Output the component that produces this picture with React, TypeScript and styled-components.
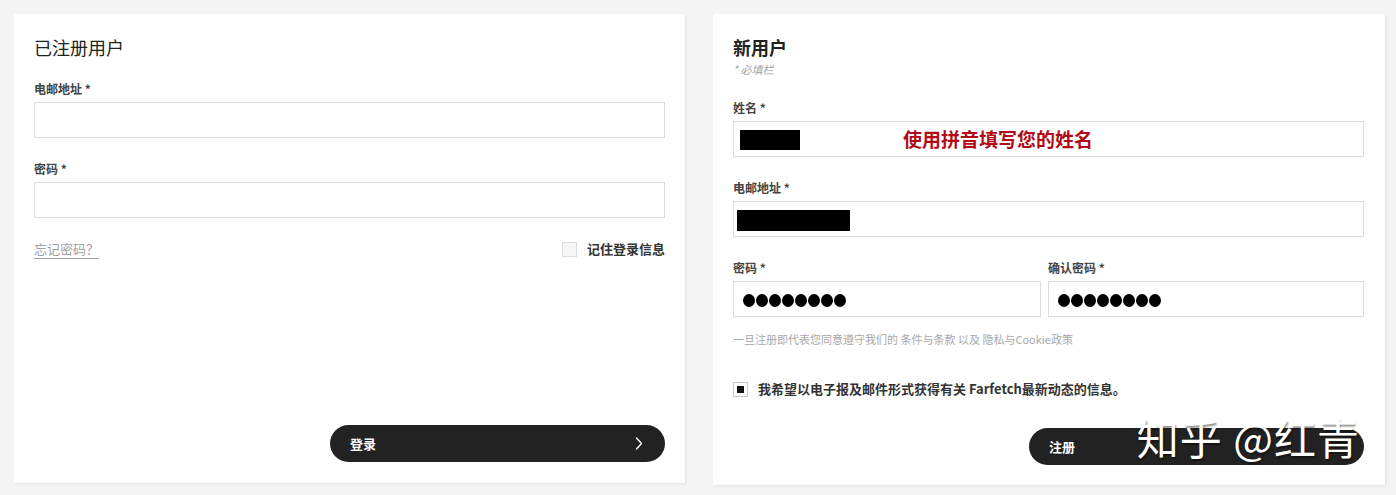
import React from 'react';
import styled, { createGlobalStyle } from 'styled-components';

const GlobalStyle = createGlobalStyle`
  html, body {
    margin: 0;
    padding: 0;
    background: #f4f4f4;
  }

  body {
    font-family: 'Noto Sans CJK SC', 'Noto Sans', 'Liberation Sans', sans-serif;
    color: #222;
  }
`;

const PASSWORD_DOTS = 8;

function Dots() {
  return (
    <DotRow>
      {Array.from({ length: PASSWORD_DOTS }).map((_, index) => (
        <Dot key={index} />
      ))}
    </DotRow>
  );
}

function Chevron() {
  return (
    <svg width="8" height="13" viewBox="0 0 8 13" fill="none">
      <polyline
        points="1.5,1 6.5,6.5 1.5,12"
        stroke="#fff"
        strokeWidth="1.4"
        strokeLinecap="round"
        strokeLinejoin="round"
      />
    </svg>
  );
}

function App() {
  return (
    <>
      <GlobalStyle />
      <Page>
        <Card>
          <Title>已注册用户</Title>
          <Field $top={22}>
            <Label>电邮地址 *</Label>
            <Input />
          </Field>
          <Field $top={23}>
            <Label>密码 *</Label>
            <Input />
          </Field>
          <OptionsRow>
            <ForgotLink>忘记密码？</ForgotLink>
            <CheckLabel>
              <Checkbox />
              记住登录信息
            </CheckLabel>
          </OptionsRow>
          <Submit>
            <span>登录</span>
            <Chevron />
          </Submit>
        </Card>

        <Card $wide>
          <Title $bold>新用户</Title>
          <Required>* 必填栏</Required>
          <Field $top={24}>
            <Label>姓名 *</Label>
            <Input>
              <Redacted $width={60} />
              <Hint>使用拼音填写您的姓名</Hint>
            </Input>
          </Field>
          <Field $top={23}>
            <Label>电邮地址 *</Label>
            <Input>
              <Redacted $width={113} $offset={-3} $height={21} />
            </Input>
          </Field>
          <PasswordRow>
            <Field>
              <Label>密码 *</Label>
              <Input>
                <Dots />
              </Input>
            </Field>
            <Field>
              <Label>确认密码 *</Label>
              <Input>
                <Dots />
              </Input>
            </Field>
          </PasswordRow>
          <Terms>一旦注册即代表您同意遵守我们的 条件与条款 以及 隐私与Cookie政策</Terms>
          <NewsletterLabel>
            <Checkbox $checked />
            我希望以电子报及邮件形式获得有关 Farfetch最新动态的信息。
          </NewsletterLabel>
          <Submit $lower>
            <span>注册</span>
          </Submit>
          <Watermark>知乎 @红青</Watermark>
        </Card>
      </Page>
    </>
  );
}

const Page = styled.div`
  display: grid;
  grid-template-columns: 671px 672px;
  column-gap: 28px;
  align-items: start;
  padding: 14px 0 0 14px;
  height: 495px;
  box-sizing: border-box;
`;

const Card = styled.div<{ $wide?: boolean }>`
  position: relative;
  display: flex;
  flex-direction: column;
  height: ${({ $wide }) => ($wide ? 471 : 469)}px;
  box-sizing: border-box;
  padding: 21px ${({ $wide }) => ($wide ? 21 : 20)}px 20px 20px;
  background: #fff;
  box-shadow: 1px 1px 2px rgba(0, 0, 0, 0.08);
`;

const Title = styled.h2<{ $bold?: boolean }>`
  margin: 0;
  font-size: 18px;
  line-height: 24px;
  font-weight: ${({ $bold }) => ($bold ? 700 : 400)};
  color: #222;
`;

const Required = styled.span`
  margin-top: 3px;
  font-size: 11px;
  line-height: 14px;
  font-style: italic;
  color: #a3a3a3;
`;

const Field = styled.div<{ $top?: number }>`
  display: flex;
  flex-direction: column;
  gap: 5px;
  margin-top: ${({ $top }) => $top ?? 0}px;
`;

const Label = styled.label`
  font-size: 12px;
  line-height: 16px;
  font-weight: 700;
  color: #444;
`;

const Input = styled.div`
  display: flex;
  align-items: center;
  height: 36px;
  box-sizing: border-box;
  padding: 0 6px;
  border: 1px solid #dcdcdc;
  background: #fff;
`;

const Redacted = styled.span<{ $width: number; $height?: number; $offset?: number }>`
  flex-shrink: 0;
  width: ${({ $width }) => $width}px;
  height: ${({ $height }) => $height ?? 20}px;
  margin-left: ${({ $offset }) => $offset ?? 0}px;
  margin-top: 2px;
  background: #000;
`;

const Hint = styled.span`
  margin-left: 103px;
  font-size: 19px;
  line-height: 24px;
  font-weight: 700;
  color: #b10b17;
`;

const DotRow = styled.span`
  display: flex;
  gap: 1px;
  margin-left: 3px;
  margin-top: 2px;
`;

const Dot = styled.span`
  width: 12px;
  height: 13px;
  border-radius: 50%;
  background: #000;
`;

const OptionsRow = styled.div`
  display: flex;
  justify-content: space-between;
  align-items: center;
  margin-top: 22px;
  height: 18px;
`;

const ForgotLink = styled.a`
  font-size: 13px;
  line-height: 16px;
  color: #a0a0a0;
  border-bottom: 1px solid #a0a0a0;
  padding-bottom: 1px;
  margin-top: 2px;
  cursor: pointer;
`;

const CheckLabel = styled.label`
  display: flex;
  align-items: center;
  gap: 10px;
  font-size: 13px;
  line-height: 18px;
  font-weight: 700;
  color: #333;
`;

const Checkbox = styled.span<{ $checked?: boolean }>`
  position: relative;
  flex-shrink: 0;
  width: 15px;
  height: 15px;
  box-sizing: border-box;
  border: 1px solid ${({ $checked }) => ($checked ? '#c8c8c8' : '#dedede')};
  background: ${({ $checked }) => ($checked ? '#fff' : '#f6f6f6')};

  &::after {
    content: '';
    display: ${({ $checked }) => ($checked ? 'block' : 'none')};
    position: absolute;
    left: 3px;
    top: 3px;
    width: 7px;
    height: 7px;
    background: #111;
  }
`;

const PasswordRow = styled.div`
  display: grid;
  grid-template-columns: 308px 1fr;
  column-gap: 7px;
  margin-top: 23px;
`;

const Terms = styled.p`
  margin: 15px 0 0;
  font-size: 11px;
  line-height: 14px;
  color: #a8a8a8;
`;

const NewsletterLabel = styled(CheckLabel)`
  margin-top: 34px;
  height: 18px;
`;

const Submit = styled.button<{ $lower?: boolean }>`
  display: flex;
  justify-content: space-between;
  align-items: center;
  align-self: flex-end;
  width: 335px;
  height: 37px;
  margin-top: auto;
  margin-bottom: ${({ $lower }) => ($lower ? 0 : 1)}px;
  padding: 0 22px 0 20px;
  border: none;
  border-radius: 19px;
  background: #222;
  color: #fff;
  font-family: inherit;
  font-size: 13px;
  font-weight: 700;
  cursor: pointer;
`;

const Watermark = styled.span`
  position: absolute;
  right: 25px;
  bottom: 25px;
  font-size: 42px;
  line-height: 46px;
  font-weight: 400;
  color: #fff;
  letter-spacing: 1px;
  text-shadow: 1px 2px 2px rgba(0, 0, 0, 0.45);
  pointer-events: none;
`;

export default App;
